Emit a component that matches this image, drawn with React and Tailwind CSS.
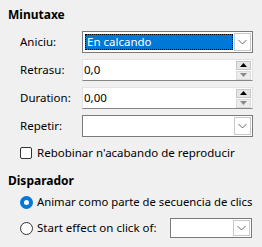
const font = { fontFamily: '"Noto Sans", "Open Sans", sans-serif' };

function Chevron() {
  return (
    <svg width="9" height="6" viewBox="0 0 9 6" className="block">
      <path d="M0.5 1 L4.5 5 L8.5 1" fill="none" stroke="#6b6b6b" strokeWidth="1" />
    </svg>
  );
}

function DropButton() {
  return (
    <div className="w-[17px] h-full bg-white border border-[#c8c8c8] flex items-center justify-center">
      <Chevron />
    </div>
  );
}

function Combo({ value, selected, className = '' }) {
  return (
    <div className={`flex border border-[#7a7a7a] bg-white p-px ${className}`}>
      <div className="flex-1 min-w-0 p-px">
        {selected ? (
          <div className="h-full bg-[#0078d7] text-white flex items-center pl-[2px] outline-1 outline-dotted outline-black -outline-offset-1">
            {value}
          </div>
        ) : (
          <div className="h-full flex items-center pl-[2px]">{value}</div>
        )}
      </div>
      <DropButton />
    </div>
  );
}

function SpinField({ value }) {
  return (
    <div className="flex-1 h-full flex items-center bg-white border border-[#e3e3e3] border-b-[#868686] pl-[1px] pr-px">
      <span className="flex-1">{value}</span>
      <div className="flex flex-col gap-px">
        <div className="w-[15px] h-[9px] bg-[#e6e6e6] border border-[#c7c7c7] flex items-center justify-center">
          <svg width="7" height="4" viewBox="0 0 7 4"><path d="M0 4 L3.5 0 L7 4 Z" fill="#000" /></svg>
        </div>
        <div className="w-[15px] h-[9px] bg-[#ececec] border border-[#dadada] flex items-center justify-center">
          <svg width="7" height="4" viewBox="0 0 7 4"><path d="M0 0 L3.5 4 L7 0 Z" fill="#8a8a8a" /></svg>
        </div>
      </div>
    </div>
  );
}

function Row({ label, children }) {
  return (
    <div className="flex items-center h-[22px]">
      <span className="w-[74px] pl-[12px] shrink-0">{label}</span>
      <div className="w-[171px] h-full flex">{children}</div>
    </div>
  );
}

export default function App() {
  return (
    <div className="w-[262px] h-[247px] bg-[#f0f0f0] text-black text-[11.5px] leading-[16px] px-2 pt-[7px] overflow-hidden whitespace-nowrap" style={font}>
      <div className="font-bold text-[12px]">Minutaxe</div>

      <div className="mt-[8px] flex flex-col gap-[6px]">
        <Row label="Aniciu:">
          <Combo value="En calcando" selected className="w-full h-full" />
        </Row>
        <Row label="Retrasu:">
          <SpinField value="0,0" />
        </Row>
        <Row label="Duration:">
          <SpinField value="0,00" />
        </Row>
        <Row label="Repetir:">
          <Combo value="" className="w-full h-full" />
        </Row>
      </div>

      <label className="mt-[8px] h-[16px] flex items-center pl-[12px] gap-[5px]">
        <span className="w-[12px] h-[12px] rounded-[2px] border border-[#333] bg-white shrink-0" />
        <span>Rebobinar n'acabando de reproducir</span>
      </label>

      <div className="mt-[12px] font-bold text-[12px]">Disparador</div>

      <div className="mt-[5px] h-[16px] flex items-center pl-[12px] gap-[4px]">
        <span className="w-[13px] h-[13px] rounded-full bg-[#0078d7] flex items-center justify-center shrink-0">
          <span className="w-[5px] h-[5px] rounded-full bg-white" />
        </span>
        <span className="text-[11.3px]">Animar como parte de secuencia de clics</span>
      </div>

      <div className="mt-[8px] h-[20px] flex items-center pl-[12px]">
        <span className="w-[13px] h-[13px] rounded-full border border-[#333] bg-white shrink-0" />
        <span className="ml-[4px] w-[133px]">Start effect on click of:</span>
        <Combo value="" className="w-[82px] h-full" />
      </div>
    </div>
  );
}
